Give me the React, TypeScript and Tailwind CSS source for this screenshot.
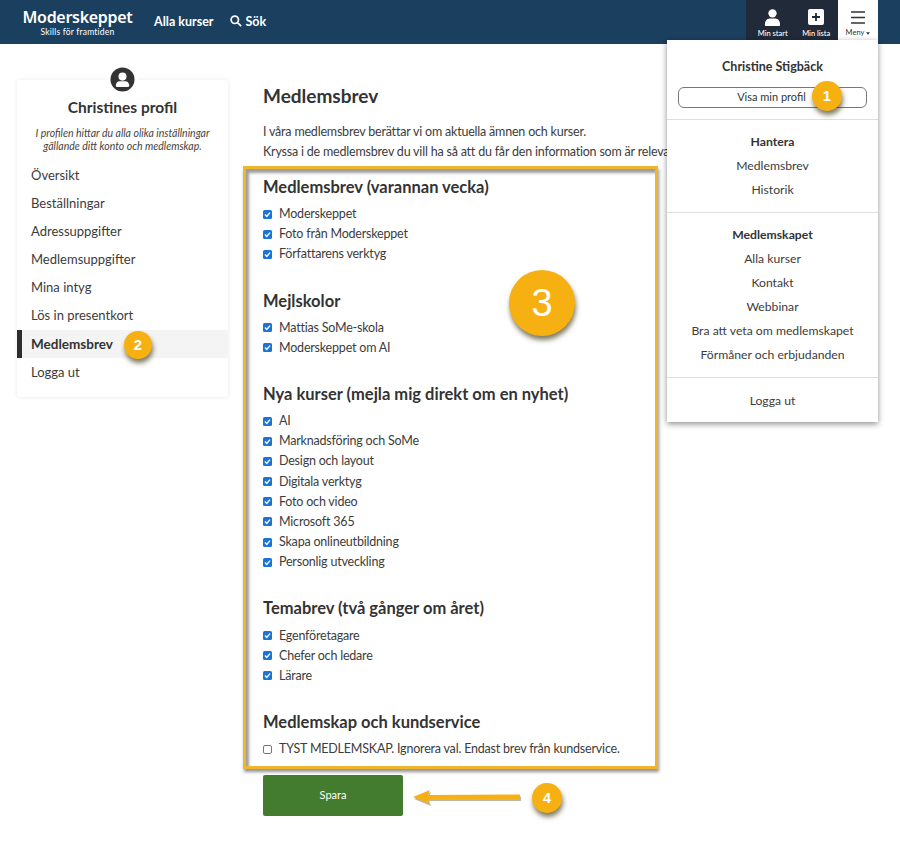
import React from "react";

const FONT = "font-['Lato','Open_Sans',sans-serif]";

function Badge({ n, className }: { n: string; className: string }) {
  return (
    <div className={`absolute z-30 flex items-center justify-center rounded-full bg-[#f7b011] text-white font-['Liberation_Sans',sans-serif] shadow-[1px_4px_5px_rgba(60,50,10,0.65)] ${className}`}>
      {n}
    </div>
  );
}

function Check({ label, checked = true }: { label: string; checked?: boolean }) {
  return (
    <label className="flex h-[20.2px] items-center gap-[7px] whitespace-nowrap text-[12.500px] leading-5 tracking-[-0.2px] text-[#3c3c3c]">
      {checked ? (
        <svg viewBox="0 0 9 9" className="size-[9px] shrink-0">
          <rect width="9" height="9" rx="1.5" fill="#1a73d9" />
          <path d="M2 4.6 3.8 6.5 7 2.6" fill="none" stroke="#fff" strokeWidth="1.4" />
        </svg>
      ) : (
        <span className="size-[9px] shrink-0 rounded-[2px] border border-[#767676] bg-white" />
      )}
      <span>{label}</span>
    </label>
  );
}

function Group({ title, items, className = "" }: { title: string; items: string[]; className?: string }) {
  return (
    <section className={className}>
      <h3 className="mb-[4px] text-[16.500px] font-bold leading-[26px] text-[#333]">{title}</h3>
      {items.map((i) => (
        <Check key={i} label={i} />
      ))}
    </section>
  );
}

const sideItems = ["Översikt", "Beställningar", "Adressuppgifter", "Medlemsuppgifter", "Mina intyg", "Lös in presentkort"];

function Sidebar() {
  return (
    <aside className="relative mt-[36px] h-[317px] w-[211px] shrink-0 rounded-[3px] bg-white pt-[17px] shadow-[0_0_5px_rgba(0,0,0,0.09)]">
      <div className="absolute left-1/2 top-[-16px] flex size-[30px] -translate-x-1/2 items-center justify-center rounded-full bg-white">
        <svg viewBox="0 0 26 26" className="size-[25px]">
          <circle cx="13" cy="13" r="12.5" fill="#333" />
          <circle cx="13" cy="10" r="4.2" fill="#fff" />
          <path d="M6 19.5c0-3.2 2.4-4.6 4-4.6h6c1.6 0 4 1.4 4 4.6 0 .8-.6 1.2-1.2 1.2H7.2C6.6 20.7 6 20.300 6 19.500z" fill="#fff" />
        </svg>
      </div>
      <h2 className="text-center text-[15.500px] font-bold leading-5 text-[#333]">Christines profil</h2>
      <p className="mt-[10px] px-2 text-center text-[10.5px] italic leading-[13px] text-[#444]">
        I profilen hittar du alla olika inställningar
        <br />
        gällande ditt konto och medlemskap.
      </p>
      <nav className="mt-[9px]">
        {sideItems.map((i) => (
          <div key={i} className="flex h-[28px] items-center pl-[14px] text-[13px] text-[#3c3c3c]">{i}</div>
        ))}
        <div className="flex h-[28px] items-center border-l-[5px] border-[#2d2d2d] bg-[#f4f4f4] pl-[9px] pt-[1px] text-[13.500px] font-bold text-[#333]">Medlemsbrev</div>
        <div className="flex h-[28px] items-center pl-[14px] pt-[1px] text-[13px] text-[#3c3c3c]">Logga ut</div>
      </nav>
    </aside>
  );
}

function MenuRow({ children, bold }: { children: React.ReactNode; bold?: boolean }) {
  return <div className={`flex h-[24px] items-center justify-center text-[12.200px] ${bold ? "font-bold text-[#333]" : "text-[#3c3c3c]"}`}>{children}</div>;
}

function Menu() {
  return (
    <div className="absolute left-[667px] top-[40px] z-20 h-[382px] w-[211px] bg-white shadow-[0_2px_6px_rgba(0,0,0,0.45)]">
      <div className="h-[80px] border-b border-[#dedede] px-[11px] pt-[17px]">
        <div className="text-center text-[12.500px] font-bold leading-5 text-[#333]">Christine Stigbäck</div>
        <div className="mt-[10px] flex h-[21px] items-center justify-center rounded-[6px] border border-[#777] pr-[2px] text-[11px] text-[#333]">Visa min profil</div>
      </div>
      <div className="h-[93px] border-b border-[#dedede] pt-[10px]">
        <MenuRow bold>Hantera</MenuRow>
        <MenuRow>Medlemsbrev</MenuRow>
        <MenuRow>Historik</MenuRow>
      </div>
      <div className="h-[165px] border-b border-[#dedede] pt-[10px]">
        <MenuRow bold>Medlemskapet</MenuRow>
        <MenuRow>Alla kurser</MenuRow>
        <MenuRow>Kontakt</MenuRow>
        <MenuRow>Webbinar</MenuRow>
        <MenuRow>Bra att veta om medlemskapet</MenuRow>
        <MenuRow>Förmåner och erbjudanden</MenuRow>
      </div>
      <div className="pt-[11px]">
        <MenuRow>Logga ut</MenuRow>
      </div>
    </div>
  );
}

function Header() {
  return (
    <header className="flex h-[44px] items-start bg-[#1b3f5f] text-white">
      <div className="ml-[23px] flex w-[109px] flex-col items-center pt-[7px]">
        <div className="whitespace-nowrap font-['Noto_Sans',sans-serif] text-[16px] font-semibold leading-[20px] tracking-[-0.3px]">Moderskeppet</div>
        <div className="whitespace-nowrap text-[8.500px] leading-[11px] tracking-[0.2px]">Skills för framtiden</div>
      </div>
      <div className="ml-[22px] mt-[12px] text-[12.500px] font-bold leading-5">Alla kurser</div>
      <svg viewBox="0 0 14 14" className="ml-[17px] mt-[15px] size-[12px]" fill="none" stroke="#fff" strokeWidth="2">
        <circle cx="5.6" cy="5.6" r="4.3" />
        <path d="M8.8 8.8 13 13" />
      </svg>
      <div className="ml-[3px] mt-[12px] text-[12.500px] font-bold leading-5">Sök</div>
      <div className="ml-auto flex h-[44px] w-[92px] bg-[#202a38] pl-[5px]">
        <div className="flex w-[44px] flex-col items-center pt-[9px]">
          <svg viewBox="0 0 18 18" className="size-[17px]" fill="#fff">
            <circle cx="9" cy="4.6" r="4.4" />
            <path d="M1 17c-.3-4 2-7 5-7h6c3 0 5.300 3 5 7 0 .6-.5 1-1 1H2c-.5 0-1-.4-1-1z" />
          </svg>
          <span className="mt-[1px] whitespace-nowrap text-[7.500px] font-medium leading-[14px]">Min start</span>
        </div>
        <div className="flex w-[44px] flex-col items-center pt-[9px]">
          <svg viewBox="0 0 16 16" className="size-[16px]">
            <rect width="16" height="16" rx="2" fill="#fff" />
            <path d="M8 4v8M4 8h8" stroke="#202a38" strokeWidth="1.800" />
          </svg>
          <span className="mt-[2px] whitespace-nowrap text-[7.500px] font-medium leading-[14px]">Min lista</span>
        </div>
      </div>
      <div className="mr-[22px] flex h-[40px] w-[40px] flex-col items-center bg-white pt-[11px] text-[#333]">
        <svg viewBox="0 0 15 14" className="h-[13px] w-[16px]" stroke="#333" strokeWidth="1.700">
          <path d="M0 1h15M0 7h15M0 13h15" />
        </svg>
        <span className="mt-[2px] flex items-center gap-[2px] text-[7.500px] leading-[14px]">
          Meny
          <svg viewBox="0 0 6 4" className="h-[3px] w-[4px]" fill="#333"><path d="M0 0h6L3 4z" /></svg>
        </span>
      </div>
    </header>
  );
}

function Main() {
  return (
    <main className="ml-[15px] w-[420px]">
      <h1 className="ml-[20px] mt-[40px] text-[19px] font-bold leading-6 text-[#333]">Medlemsbrev</h1>
      <p className="ml-[20px] mt-[14px] whitespace-nowrap text-[12.500px] leading-5 tracking-[-0.2px] text-[#3c3c3c]">
        I våra medlemsbrev berättar vi om aktuella ämnen och kurser.
        <br />
        Kryssa i de medlemsbrev du vill ha så att du får den information som är relevant för dig.
      </p>
      <div className="mt-[4px] h-[603px] w-[415px] border-[3px] border-[#eeb62f] bg-white pl-[17px] pt-[5px] shadow-[inset_3px_4px_3px_rgba(60,60,60,0.5),1px_3px_3px_rgba(60,60,60,0.55)]">
        <Group title="Medlemsbrev (varannan vecka)" items={["Moderskeppet", "Foto från Moderskeppet", "Författarens verktyg"]} />
        <Group className="mt-[23px]" title="Mejlskolor" items={["Mattias SoMe-skola", "Moderskeppet om AI"]} />
        <Group className="mt-[23px]" title="Nya kurser (mejla mig direkt om en nyhet)" items={["AI", "Marknadsföring och SoMe", "Design och layout", "Digitala verktyg", "Foto och video", "Microsoft 365", "Skapa onlineutbildning", "Personlig utveckling"]} />
        <Group className="mt-[23px]" title="Temabrev (två gånger om året)" items={["Egenföretagare", "Chefer och ledare", "Lärare"]} />
        <section className="mt-[23px]">
          <h3 className="mb-[4px] text-[16.500px] font-bold leading-[26px] text-[#333]">Medlemskap och kundservice</h3>
          <Check label="TYST MEDLEMSKAP. Ignorera val. Endast brev från kundservice." checked={false} />
        </section>
      </div>
      <button className="ml-[20px] mt-[6px] flex h-[41px] w-[140px] items-center justify-center rounded-[2px] bg-[#437c2e] text-[11px] text-white">Spara</button>
    </main>
  );
}

export default function App() {
  return (
    <div className={`relative h-[846px] w-[900px] overflow-hidden bg-white ${FONT}`}>
      <Header />
      <div className="flex pl-[17px]">
        <Sidebar />
        <Main />
      </div>
      <Menu />
      <Badge n="1" className="left-[812px] top-[81px] size-[30px] text-[15px] font-bold" />
      <Badge n="2" className="left-[124px] top-[331px] size-[28px] text-[15px] font-bold" />
      <Badge n="3" className="left-[509px] top-[270px] size-[66px] text-[38px]" />
      <Badge n="4" className="left-[532px] top-[783px] size-[30px] text-[15px] font-bold" />
      <svg className="absolute left-[410px] top-[785px] z-30 h-[24px] w-[114px]" viewBox="0 0 114 24">
        <path d="M3 12 L20 5 L18 10 L110 9.500 L110 14 L18 14 L20 19 Z" fill="#7a7050" opacity="0.5" transform="translate(1,2)" />
        <path d="M3 12 L20 5 L18 10 L110 9.500 L110 14 L18 14 L20 19 Z" fill="#f7b011" />
      </svg>
    </div>
  );
}
